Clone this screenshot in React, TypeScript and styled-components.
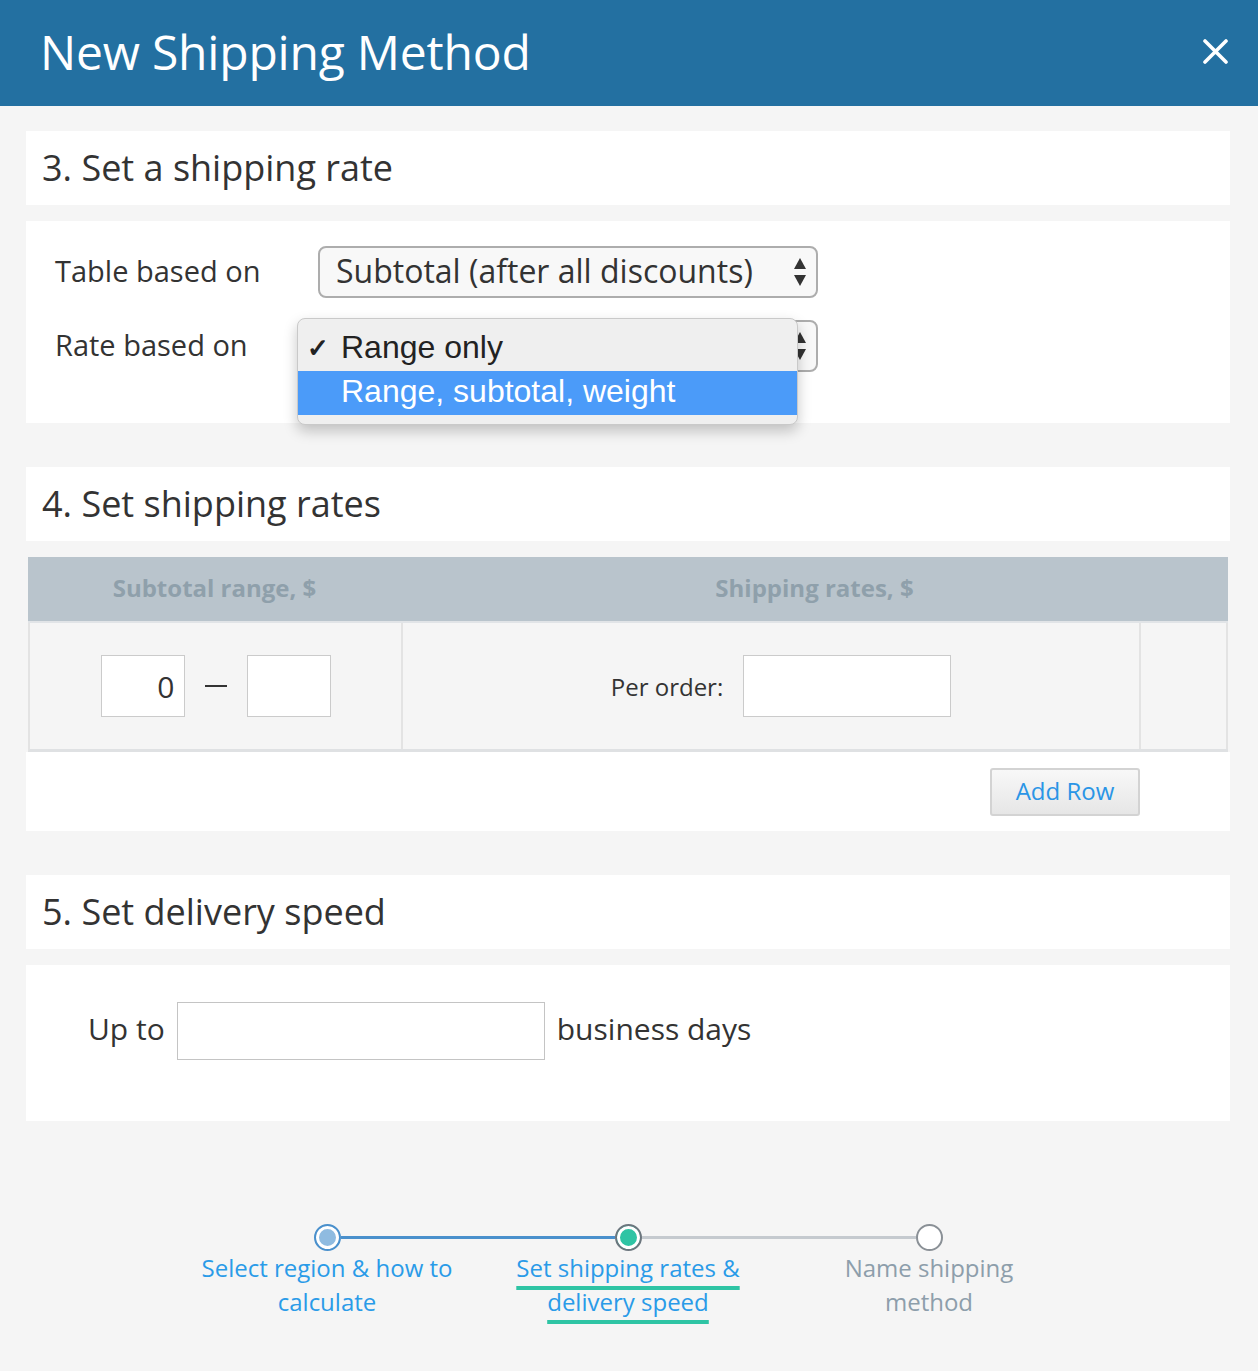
import React from 'react';
import styled, { createGlobalStyle } from 'styled-components';

const GlobalStyle = createGlobalStyle`
  html, body {
    margin: 0;
    padding: 0;
    background: #f5f5f5;
  }
  body {
    font-family: 'Open Sans', 'Liberation Sans', sans-serif;
    color: #333;
  }
  * {
    box-sizing: border-box;
  }
`;

const Page = styled.div`
  width: 1258px;
  min-height: 1371px;
  background: #f5f5f5;
`;

const Header = styled.header`
  height: 106px;
  background: #2370a1;
  display: flex;
  align-items: center;
  justify-content: space-between;
  padding: 0 30px 4px 40px;
`;

const Title = styled.h1`
  margin: 0;
  font-size: 48px;
  font-weight: 400;
  color: #fff;
  letter-spacing: -0.2px;
`;

const CloseButton = styled.button`
  border: 0;
  background: none;
  padding: 0;
  width: 25px;
  height: 25px;
  cursor: pointer;
  display: flex;
`;

const Main = styled.main`
  padding: 25px 28px 0 26px;
`;

const SectionTitle = styled.h2<{ $gap?: number }>`
  margin: 0 0 16px;
  height: 74px;
  background: #fff;
  display: flex;
  align-items: center;
  padding: 0 0 2px 16px;
  font-size: 36px;
  font-weight: 400;
  color: #333;
  margin-top: ${(p) => p.$gap ?? 0}px;
`;

const Card = styled.section<{ $height: number }>`
  background: #fff;
  height: ${(p) => p.$height}px;
`;

const RateForm = styled.div`
  padding: 25px 0 0 29px;
  display: flex;
  flex-direction: column;
  gap: 22px;
`;

const FormRow = styled.div`
  display: flex;
  align-items: center;
`;

const Label = styled.span`
  width: 263px;
  font-size: 29px;
  color: #333;
  margin-top: -3px;
`;

const SelectWrap = styled.div`
  position: relative;
`;

const Select = styled.div`
  width: 500px;
  height: 52px;
  border: 2px solid #adadad;
  border-radius: 8px;
  background: #f8f8f8;
  display: flex;
  align-items: center;
  justify-content: space-between;
  padding: 0 8px 3px 16px;
  font-size: 32px;
  color: #333;

  svg {
    margin-top: 3px;
  }
`;

const Menu = styled.ul`
  position: absolute;
  left: -21px;
  top: -2px;
  width: 501px;
  margin: 0;
  padding: 8px 0 9px;
  list-style: none;
  background: #efefef;
  border: 1px solid #c9c9c9;
  border-radius: 8px;
  box-shadow: 0 6px 14px rgba(0, 0, 0, 0.22);
  font-family: 'Liberation Sans', Arial, sans-serif;
  z-index: 2;
`;

const MenuItem = styled.li<{ $active?: boolean }>`
  height: 44px;
  display: flex;
  align-items: center;
  padding: 0 0 4px 43px;
  position: relative;
  font-size: 32px;
  color: ${(p) => (p.$active ? '#fff' : '#222')};
  background: ${(p) => (p.$active ? '#4b9bf9' : 'transparent')};
`;

const Check = styled.span`
  position: absolute;
  left: 9px;
  top: 6px;
  font-size: 26px;
  font-weight: 700;
`;

const Table = styled.div`
  margin: 0 2px;
`;

const TableHead = styled.div`
  display: grid;
  grid-template-columns: 373px 1fr;
  height: 66px;
  background: #b9c4cc;
  border-bottom: 2px solid #e1e4e7;
`;

const HeadCell = styled.div`
  display: flex;
  align-items: center;
  justify-content: center;
  padding-bottom: 3px;
  font-size: 24px;
  font-weight: 700;
  color: #8fa0ab;
`;

const TableRow = styled.div`
  display: grid;
  grid-template-columns: 373px 738px 1fr;
  height: 129px;
  background: #f5f5f5;
  border-left: 2px solid #e3e3e3;
  border-bottom: 3px solid #dfe1e3;
`;

const Cell = styled.div<{ $shift?: number }>`
  display: flex;
  align-items: center;
  justify-content: center;
  gap: 20px;
  padding-left: ${(p) => p.$shift ?? 0}px;
  border-right: 2px solid #e3e3e3;
  font-size: 24px;
  color: #333;
`;

const NumberInput = styled.div<{ $width: number }>`
  width: ${(p) => p.$width}px;
  height: 62px;
  background: #fff;
  border: 1px solid #cbcbcb;
  display: flex;
  align-items: center;
  justify-content: flex-end;
  padding-right: 9px;
  font-size: 30px;
  color: #333;
`;

const Dash = styled.span`
  width: 22px;
  height: 2px;
  background: #333;
`;

const TableFooter = styled.div`
  background: #fff;
  height: 79px;
  display: flex;
  justify-content: flex-end;
  align-items: center;
  padding-right: 90px;
  margin-bottom: 44px;
`;

const AddButton = styled.button`
  width: 150px;
  height: 48px;
  border: 2px solid #d3d3d3;
  border-radius: 3px;
  background: linear-gradient(#f8f8f8, #e6e6e6);
  font-family: 'Open Sans', sans-serif;
  font-size: 24px;
  color: #2a95e6;
  cursor: pointer;
  padding: 0 0 2px;
`;

const SpeedRow = styled.div`
  display: flex;
  align-items: center;
  padding: 37px 0 0 62px;
  font-size: 30px;
  color: #333;
  gap: 12px;

  span {
    margin-top: -5px;
  }
`;

const TextInput = styled.div`
  width: 368px;
  height: 58px;
  background: #fff;
  border: 1px solid #c4c4c4;
`;

const Stepper = styled.ol`
  list-style: none;
  margin: 102px auto 0;
  padding: 0;
  width: 903px;
  display: flex;
`;

const Step = styled.li`
  flex: 1;
  display: flex;
  flex-direction: column;
  align-items: center;
`;

const Track = styled.div`
  width: 100%;
  height: 28px;
  display: flex;
  align-items: center;
`;

const Line = styled.span<{ $color: string }>`
  flex: 1;
  height: 3px;
  background: ${(p) => p.$color};
`;

const Dot = styled.span<{ $ring: string; $fill: string }>`
  width: 27px;
  height: 27px;
  border-radius: 50%;
  border: 2px solid ${(p) => p.$ring};
  background: ${(p) => p.$fill};
  box-shadow: inset 0 0 0 3px #fff;
  flex: none;
`;

const StepLabel = styled.div<{ $state: 'done' | 'active' | 'todo'; $width: number }>`
  margin-top: 0;
  font-size: 24px;
  line-height: 34px;
  text-align: center;
  width: ${(p) => p.$width}px;
  color: ${(p) => (p.$state === 'todo' ? '#8d9eab' : '#2a9be8')};
  text-decoration: ${(p) => (p.$state === 'active' ? 'underline' : 'none')};
  text-decoration-color: #2ec4a4;
  text-decoration-thickness: 4px;
  text-underline-offset: 9px;
  text-decoration-skip-ink: none;
`;

const Arrows = () => (
  <svg width="16" height="32" viewBox="0 0 16 32">
    <path d="M8 2 L14 13 H2 Z" fill="#333" />
    <path d="M8 30 L14 19 H2 Z" fill="#333" />
  </svg>
);

const CloseIcon = () => (
  <svg width="25" height="25" viewBox="0 0 25 25">
    <path
      d="M2 2 L23 23 M23 2 L2 23"
      stroke="#fff"
      strokeWidth="3.6"
      strokeLinecap="round"
    />
  </svg>
);

const steps = [
  {
    label: 'Select region & how to calculate',
    state: 'done' as const,
    width: 270,
    left: 'transparent',
    right: '#4a90cc',
    ring: '#4a90cc',
    fill: '#8fbbe0',
  },
  {
    label: 'Set shipping rates & delivery speed',
    state: 'active' as const,
    width: 270,
    left: '#4a90cc',
    right: '#c5cacf',
    ring: '#6c767e',
    fill: '#2ec4a4',
  },
  {
    label: 'Name shipping method',
    state: 'todo' as const,
    width: 200,
    left: '#c5cacf',
    right: 'transparent',
    ring: '#8a9096',
    fill: '#fff',
  },
];

export default function App() {
  return (
    <Page>
      <GlobalStyle />
      <Header>
        <Title>New Shipping Method</Title>
        <CloseButton aria-label="Close">
          <CloseIcon />
        </CloseButton>
      </Header>
      <Main>
        <SectionTitle>3. Set a shipping rate</SectionTitle>
        <Card $height={202}>
          <RateForm>
            <FormRow>
              <Label>Table based on</Label>
              <Select>
                Subtotal (after all discounts)
                <Arrows />
              </Select>
            </FormRow>
            <FormRow>
              <Label>Rate based on</Label>
              <SelectWrap>
                <Select>
                  <span />
                  <Arrows />
                </Select>
                <Menu>
                  <MenuItem>
                    <Check>✓</Check>
                    Range only
                  </MenuItem>
                  <MenuItem $active>Range, subtotal, weight</MenuItem>
                </Menu>
              </SelectWrap>
            </FormRow>
          </RateForm>
        </Card>

        <SectionTitle $gap={44}>4. Set shipping rates</SectionTitle>
        <Table>
          <TableHead>
            <HeadCell>Subtotal range, $</HeadCell>
            <HeadCell>Shipping rates, $</HeadCell>
          </TableHead>
          <TableRow>
            <Cell>
              <NumberInput $width={84}>0</NumberInput>
              <Dash />
              <NumberInput $width={84} />
            </Cell>
            <Cell $shift={20}>
              Per order:
              <NumberInput $width={208} />
            </Cell>
            <Cell />
          </TableRow>
        </Table>
        <TableFooter>
          <AddButton>Add Row</AddButton>
        </TableFooter>

        <SectionTitle>5. Set delivery speed</SectionTitle>
        <Card $height={156}>
          <SpeedRow>
            <span>Up to</span>
            <TextInput />
            <span>business days</span>
          </SpeedRow>
        </Card>

        <Stepper>
          {steps.map((s) => (
            <Step key={s.label}>
              <Track>
                <Line $color={s.left} />
                <Dot $ring={s.ring} $fill={s.fill} />
                <Line $color={s.right} />
              </Track>
              <StepLabel $state={s.state} $width={s.width}>
                {s.label}
              </StepLabel>
            </Step>
          ))}
        </Stepper>
      </Main>
    </Page>
  );
}
